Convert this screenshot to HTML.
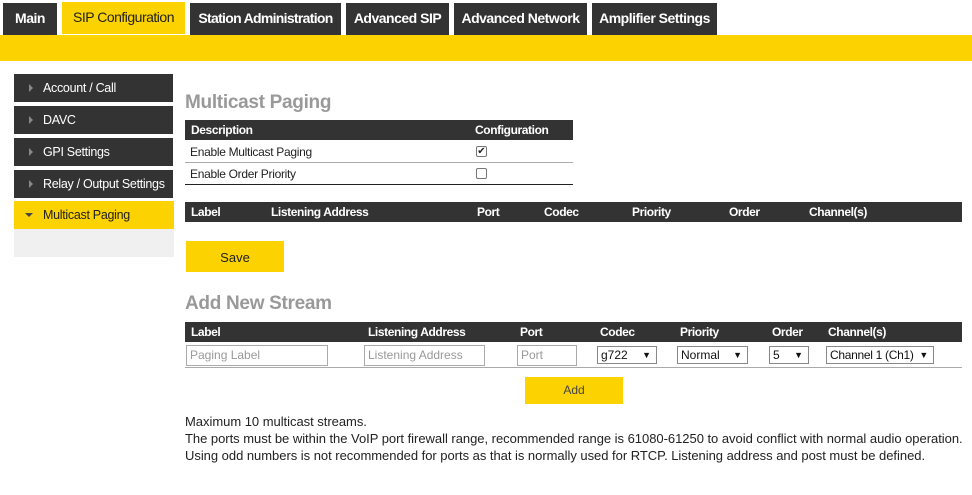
<!DOCTYPE html>
<html><head><style>
*{box-sizing:border-box;margin:0;padding:0}
body{width:972px;height:495px;background:#fff;font-family:"Liberation Sans",sans-serif;font-size:12px;color:#222;position:relative;overflow:hidden}
.a{position:absolute;white-space:nowrap}
.tab{position:absolute;top:3px;height:32px;background:#333;color:#fff;font-size:14px;line-height:30px;text-align:center;letter-spacing:-0.5px;white-space:nowrap;font-weight:bold}
.side{position:absolute;left:14px;width:159px;height:28px;background:#333;color:#fff;font-size:12.5px;line-height:28px;padding-left:29px;letter-spacing:-0.3px;white-space:nowrap}
.side:before{content:"";position:absolute;left:15px;top:10px;border-left:4px solid #888;border-top:4px solid transparent;border-bottom:4px solid transparent}
.hd{position:absolute;background:#333;color:#fff;font-weight:bold;font-size:12px;line-height:20px;height:20px;letter-spacing:-0.4px}
.hd span{position:absolute;top:0;white-space:nowrap}
.inp{position:absolute;top:345px;height:21px;border:1px solid #aaa;color:#999;font-size:12px;line-height:19px;padding-left:3px;white-space:nowrap}
.sel{position:absolute;top:346px;height:18px;border:1px solid #888;color:#111;font-size:12px;line-height:16px;padding-left:3px;white-space:nowrap}
.sel:after{content:"\25BC";position:absolute;right:5px;top:0;font-size:9px}
h2{position:absolute;left:185px;font-size:19px;color:#999;font-weight:bold;letter-spacing:-0.3px}
.cb{position:absolute;left:476px;width:11px;height:11px;border:1px solid #777;border-radius:2px;background:#fff}
</style></head><body>
<div class="tab" style="left:3px;width:54px">Main</div>
<div class="tab" style="left:62px;width:123px;top:2px;background:#fcd200;color:#222;font-weight:normal">SIP Configuration</div>
<div class="tab" style="left:190px;width:151px;letter-spacing:-0.7px">Station Administration</div>
<div class="tab" style="left:346px;width:103px">Advanced SIP</div>
<div class="tab" style="left:454px;width:133px">Advanced Network</div>
<div class="tab" style="left:592px;width:125px">Amplifier Settings</div>
<div class="a" style="left:0;top:35px;width:972px;height:26px;background:#fcd200"></div>

<div class="side" style="top:74px">Account / Call</div>
<div class="side" style="top:106px">DAVC</div>
<div class="side" style="top:138px">GPI Settings</div>
<div class="side" style="top:170px">Relay / Output Settings</div>
<div class="a" style="left:14px;top:201px;width:160px;height:28px;background:#fcd200;color:#222;font-size:12.5px;line-height:28px;padding-left:29px;letter-spacing:-0.3px">Multicast Paging<span class="a" style="left:11px;top:12px;border-top:4px solid #444;border-left:4px solid transparent;border-right:4px solid transparent"></span></div>
<div class="a" style="left:14px;top:229px;width:160px;height:28px;background:#f0f0f0"></div>

<h2 style="top:92px">Multicast Paging</h2>
<div class="hd" style="left:185px;top:120px;width:388px"><span style="left:6px">Description</span><span style="left:290px">Configuration</span></div>
<div class="a" style="left:185px;top:141px;width:388px;height:22px;border-bottom:1px solid #aaa;line-height:22px;padding-left:5px;letter-spacing:-0.3px">Enable Multicast Paging</div>
<div class="cb" style="top:146px;font-size:10px;line-height:9px;text-align:center">&#10004;</div>
<div class="a" style="left:185px;top:163px;width:388px;height:22px;border-bottom:1px solid #222;line-height:22px;padding-left:5px;letter-spacing:-0.3px">Enable Order Priority</div>
<div class="cb" style="top:168px"></div>

<div class="hd" style="left:185px;top:202px;width:777px"><span style="left:6px">Label</span><span style="left:86px">Listening Address</span><span style="left:292px">Port</span><span style="left:359px">Codec</span><span style="left:447px">Priority</span><span style="left:544px">Order</span><span style="left:624px">Channel(s)</span></div>
<div class="a" style="left:186px;top:241px;width:98px;height:31px;background:#fcd200;text-align:center;line-height:33px;font-size:13px">Save</div>

<h2 style="top:293px">Add New Stream</h2>
<div class="hd" style="left:185px;top:322px;width:777px"><span style="left:6px">Label</span><span style="left:183px">Listening Address</span><span style="left:335px">Port</span><span style="left:415px">Codec</span><span style="left:495px">Priority</span><span style="left:587px">Order</span><span style="left:643px">Channel(s)</span></div>
<div class="inp" style="left:186px;width:142px">Paging Label</div>
<div class="inp" style="left:364px;width:121px">Listening Address</div>
<div class="inp" style="left:517px;width:60px">Port</div>
<div class="sel" style="left:597px;width:60px">g722</div>
<div class="sel" style="left:677px;width:71px">Normal</div>
<div class="sel" style="left:769px;width:40px">5</div>
<div class="sel" style="left:826px;width:108px;letter-spacing:-0.3px">Channel 1 (Ch1)</div>
<div class="a" style="left:185px;top:367px;width:777px;height:1px;background:#aaa"></div>
<div class="a" style="left:525px;top:377px;width:98px;height:27px;background:#fcd200;text-align:center;line-height:27px;color:#444">Add</div>

<div class="a" style="left:185px;top:413px;font-size:13px;line-height:17px;color:#222;letter-spacing:-0.03px">Maximum 10 multicast streams.<br>The ports must be within the VoIP port firewall range, recommended range is 61080-61250 to avoid conflict with normal audio operation.<br>Using odd numbers is not recommended for ports as that is normally used for RTCP. Listening address and post must be defined.</div>
</body></html>
